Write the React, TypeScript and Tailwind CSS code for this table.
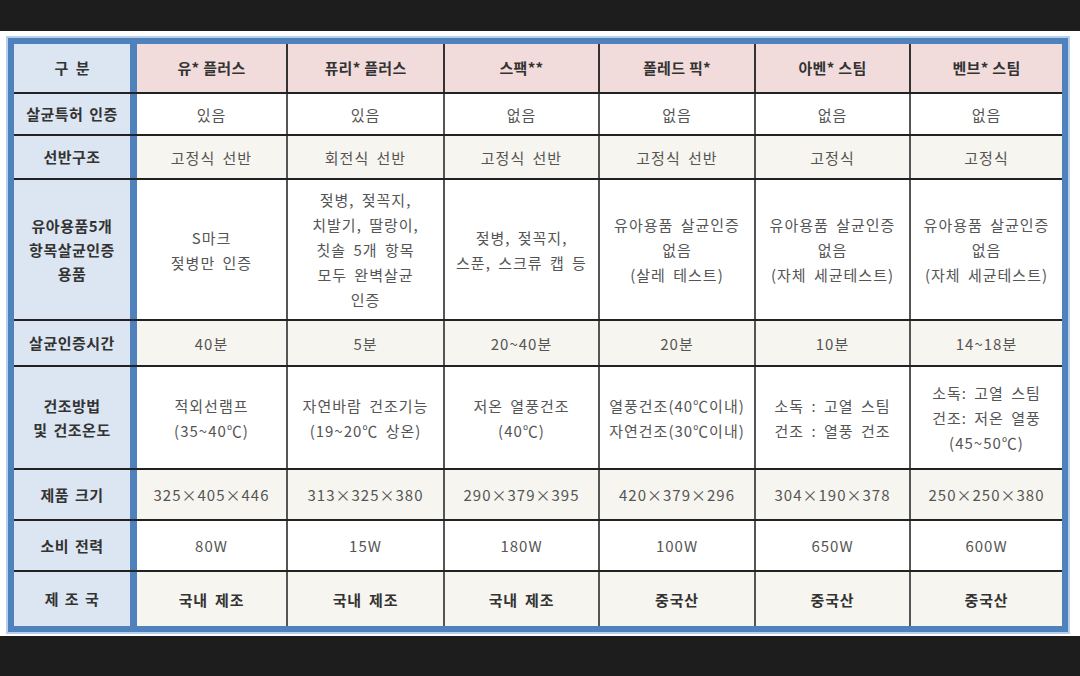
import React from "react";

type Row = {
  label: string[];
  cells: string[][];
  height: string;
  cream?: boolean;
  bold?: boolean;
};

const headers = ["유* 플러스", "퓨리* 플러스", "스팩**", "폴레드 픽*", "아벤* 스팀", "벤브* 스팀"];

const rows: Row[] = [
  {
    label: ["살균특허 인증"],
    cells: [["있음"], ["있음"], ["없음"], ["없음"], ["없음"], ["없음"]],
    height: "h-[42px]",
  },
  {
    label: ["선반구조"],
    cells: [["고정식 선반"], ["회전식 선반"], ["고정식 선반"], ["고정식 선반"], ["고정식"], ["고정식"]],
    height: "h-[44px]",
    cream: true,
  },
  {
    label: ["유아용품5개", "항목살균인증", "용품"],
    cells: [
      ["S마크", "젖병만 인증"],
      ["젖병, 젖꼭지,", "치발기, 딸랑이,", "칫솔 5개 항목", "모두 완벽살균", "인증"],
      ["젖병, 젖꼭지,", "스푼, 스크류 캡 등"],
      ["유아용품 살균인증", "없음", "(살레 테스트)"],
      ["유아용품 살균인증", "없음", "(자체 세균테스트)"],
      ["유아용품 살균인증", "없음", "(자체 세균테스트)"],
    ],
    height: "h-[141px]",
  },
  {
    label: ["살균인증시간"],
    cells: [["40분"], ["5분"], ["20~40분"], ["20분"], ["10분"], ["14~18분"]],
    height: "h-[46px]",
    cream: true,
  },
  {
    label: ["건조방법", "및 건조온도"],
    cells: [
      ["적외선램프", "(35~40℃)"],
      ["자연바람 건조기능", "(19~20℃ 상온)"],
      ["저온 열풍건조", "(40℃)"],
      ["열풍건조(40℃이내)", "자연건조(30℃이내)"],
      ["소독 : 고열 스팀", "건조 : 열풍 건조"],
      ["소독: 고열 스팀", "건조: 저온 열풍", "(45~50℃)"],
    ],
    height: "h-[103px]",
  },
  {
    label: ["제품 크기"],
    cells: [["325×405×446"], ["313×325×380"], ["290×379×395"], ["420×379×296"], ["304×190×378"], ["250×250×380"]],
    height: "h-[51px]",
    cream: true,
  },
  {
    label: ["소비 전력"],
    cells: [["80W"], ["15W"], ["180W"], ["100W"], ["650W"], ["600W"]],
    height: "h-[51px]",
  },
  {
    label: ["제 조 국"],
    cells: [["국내 제조"], ["국내 제조"], ["국내 제조"], ["중국산"], ["중국산"], ["중국산"]],
    height: "h-[54px]",
    cream: true,
    bold: true,
  },
];

const widths = ["w-[151px]", "w-[157px]", "w-[155px]", "w-[156px]", "w-[155px]", "w-[151px]"];

const font = { fontFamily: '"Noto Sans CJK KR", "Noto Sans", sans-serif' };

function Lines({ lines }: { lines: string[] }) {
  return (
    <div className="flex flex-col items-center">
      {lines.map((l, i) => (
        <span key={i} className="whitespace-pre">
          {l}
        </span>
      ))}
    </div>
  );
}

export default function App() {
  return (
    <div className="w-[1080px] h-[676px] bg-[#1d1d1d] overflow-hidden" style={font}>
      <div className="mt-[31px] h-[605px] bg-white pt-[7px] pl-[8px]">
        <div className="w-[1060px] border-[6px] border-[#4f81bd] shadow-[0_0_0_2px_#b9d0ea]">
          {/* 헤더 */}
          <div className="flex h-[50px] border-b-2 border-[#222]">
            <div className="w-[123px] flex items-center justify-center bg-[#dce6f2] border-r-[7px] border-r-[#4f81bd] text-[15px] font-bold text-[#333] [word-spacing:4px]">
              구 분
            </div>
            {headers.map((h, i) => (
              <div
                key={h}
                className={`${widths[i]} flex items-center justify-center bg-[#f2dcdb] text-[15px] font-bold text-[#333] tracking-[0.3px] ${
                  i < 5 ? "border-r-2 border-[#333]" : ""
                }`}>
                {h}
              </div>
            ))}
          </div>
          {rows.map((r, ri) => (
            <div
              key={ri}
              className={`flex ${r.height} ${ri < rows.length - 1 ? "border-b-2 border-[#222]" : ""}`}>
              <div className="w-[123px] flex items-center justify-center bg-[#dce6f2] border-r-[7px] border-r-[#4f81bd] text-[15px] font-bold text-[#333] tracking-[0.5px] leading-[24px] [word-spacing:2px]">
                <Lines lines={r.label} />
              </div>
              {r.cells.map((c, ci) => (
                <div
                  key={ci}
                  className={`${widths[ci]} flex items-center justify-center text-center leading-[25px] text-[15px] ${
                    r.bold ? "font-bold text-[#333] tracking-[0.8px] [word-spacing:3px]" : "text-[#555] tracking-[1px] [word-spacing:3px]"
                  } ${r.cream ? "bg-[#f7f5f0]" : "bg-white"} ${ci < 5 ? "border-r-2 border-[#555]" : ""}`}>
                  <Lines lines={c} />
                </div>
              ))}
            </div>
          ))}
        </div>
      </div>
    </div>
  );
}
